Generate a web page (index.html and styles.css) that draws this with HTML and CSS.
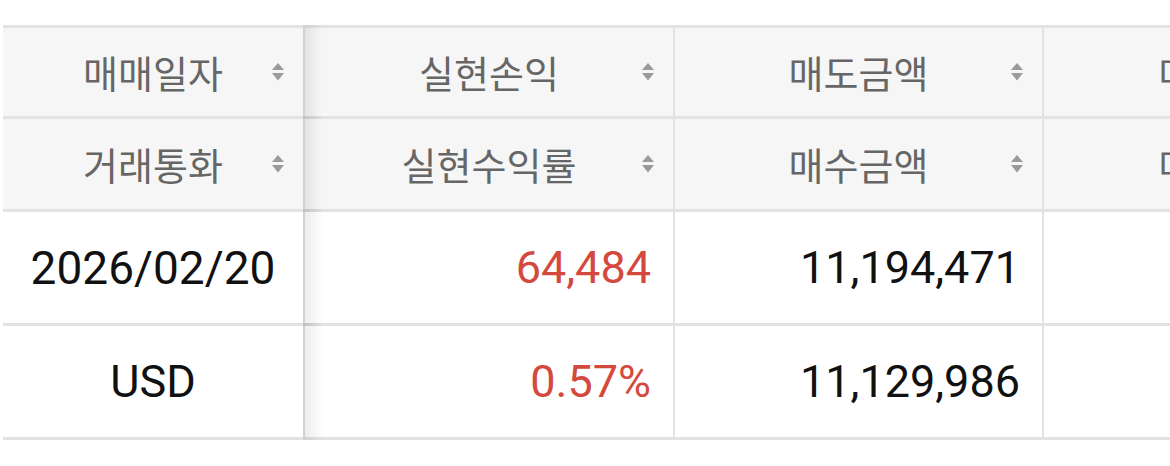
FILE: index.html
```html
<!DOCTYPE html>
<html lang="ko">
<head>
<meta charset="utf-8">
<title>매매내역</title>
<link rel="stylesheet" href="styles.css">
</head>
<body>
<div class="page">
  <div class="grid">
    <div class="cell head fixed"><span class="label">매매일자</span><svg class="sort" viewBox="0 0 12 18"><path d="M6 0L12 7H0Z M0 10H12L6 17.5Z"/></svg></div>
    <div class="cell head"><span class="label">실현손익</span><svg class="sort" viewBox="0 0 12 18"><path d="M6 0L12 7H0Z M0 10H12L6 17.5Z"/></svg></div>
    <div class="cell head"><span class="label">매도금액</span><svg class="sort" viewBox="0 0 12 18"><path d="M6 0L12 7H0Z M0 10H12L6 17.5Z"/></svg></div>
    <div class="cell head"><span class="label">매도단가</span><svg class="sort" viewBox="0 0 12 18"><path d="M6 0L12 7H0Z M0 10H12L6 17.5Z"/></svg></div>

    <div class="cell head fixed"><span class="label">거래통화</span><svg class="sort" viewBox="0 0 12 18"><path d="M6 0L12 7H0Z M0 10H12L6 17.5Z"/></svg></div>
    <div class="cell head"><span class="label">실현수익률</span><svg class="sort" viewBox="0 0 12 18"><path d="M6 0L12 7H0Z M0 10H12L6 17.5Z"/></svg></div>
    <div class="cell head"><span class="label">매수금액</span><svg class="sort" viewBox="0 0 12 18"><path d="M6 0L12 7H0Z M0 10H12L6 17.5Z"/></svg></div>
    <div class="cell head"><span class="label">매수단가</span><svg class="sort" viewBox="0 0 12 18"><path d="M6 0L12 7H0Z M0 10H12L6 17.5Z"/></svg></div>

    <div class="cell data fixed center date">2026/02/20</div>
    <div class="cell data num up">64,484</div>
    <div class="cell data num">11,194,471</div>
    <div class="cell data num"></div>

    <div class="cell data fixed center">USD</div>
    <div class="cell data num up">0.57%</div>
    <div class="cell data num">11,129,986</div>
    <div class="cell data num"></div>
  </div>
</div>
</body>
</html>
```

FILE: styles.css
```css
html, body {
  margin: 0;
  padding: 0;
  background: #ffffff;
}

body {
  width: 1170px;
  height: 466px;
  overflow: hidden;
  font-family: Roboto, "Noto Sans CJK KR", sans-serif;
}

.page {
  padding: 25px 0 0 3px;
}

.grid {
  display: grid;
  grid-template-columns: 300px 368px 367px 369px;
  grid-template-rows: 88px 90px 111px 111px;
  gap: 3px 2px;
  padding: 3px 0;
  background: #e2e2e2;
  width: max-content;
}

.cell {
  background: #ffffff;
  position: relative;
  box-sizing: border-box;
}

.head {
  background: #f6f6f6;
  display: grid;
  grid-template-columns: 1fr auto 1fr;
  align-items: center;
  padding: 0 19px;
  color: #666666;
  font-family: "Noto Sans CJK KR", sans-serif;
  font-size: 38px;
  line-height: 1;
}

.head .label {
  grid-column: 2;
  white-space: nowrap;
}

.head .sort {
  grid-column: 3;
  justify-self: end;
  width: 12px;
  height: 18px;
  fill: #9a9a9a;
}

.fixed {
  z-index: 1;
}

.fixed::after {
  content: "";
  position: absolute;
  top: -3px;
  bottom: -3px;
  left: 100%;
  width: 20px;
  background: linear-gradient(to right, rgba(0, 0, 0, 0.08), rgba(0, 0, 0, 0));
  pointer-events: none;
}

.data {
  display: flex;
  align-items: center;
  font-size: 45px;
  color: #111111;
  white-space: nowrap;
}

.date {
  font-size: 46px;
}

.center {
  justify-content: center;
}

.num {
  justify-content: flex-end;
  padding-right: 22px;
}

.up {
  color: #d4493d;
}
```
